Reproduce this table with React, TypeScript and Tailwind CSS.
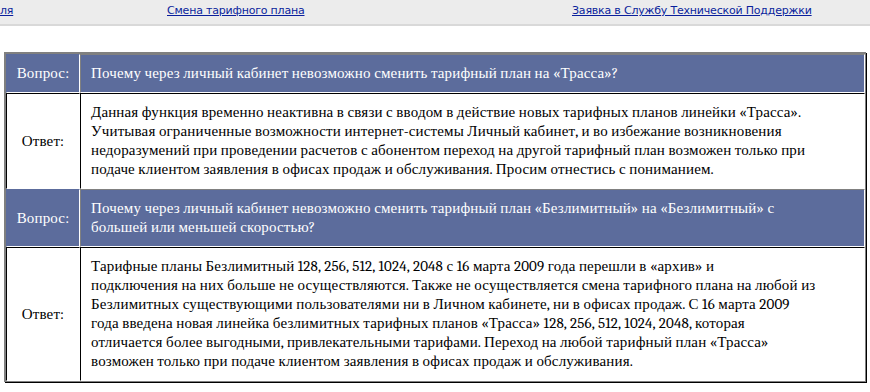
const rows = [
  {
    q: ["Почему через личный кабинет невозможно сменить тарифный план на «Трасса»?"],
    a: [
      "Данная функция временно неактивна в связи с вводом в действие новых тарифных планов линейки «Трасса».",
      "Учитывая ограниченные возможности интернет-системы Личный кабинет, и во избежание возникновения",
      "недоразумений при проведении расчетов с абонентом переход на другой тарифный план возможен только при",
      "подаче клиентом заявления в офисах продаж и обслуживания. Просим отнестись с пониманием.",
    ],
  },
  {
    q: [
      "Почему через личный кабинет невозможно сменить тарифный план «Безлимитный» на «Безлимитный» с",
      "большей или меньшей скоростью?",
    ],
    a: [
      "Тарифные планы Безлимитный 128, 256, 512, 1024, 2048 с 16 марта 2009 года перешли в «архив» и",
      "подключения на них больше не осуществляются. Также не осуществляется смена тарифного плана на любой из",
      "Безлимитных существующими пользователями ни в Личном кабинете, ни в офисах продаж. С 16 марта 2009",
      "года введена новая линейка безлимитных тарифных планов «Трасса» 128, 256, 512, 1024, 2048, которая",
      "отличается более выгодными, привлекательными тарифами. Переход на любой тарифный план «Трасса»",
      "возможен только при подаче клиентом заявления в офисах продаж и обслуживания.",
    ],
  },
]

function Lines({ lines }: { lines: string[] }) {
  return (
    <>
      {lines.map((l, i) => (
        <div key={i} className="whitespace-nowrap">{l}</div>
      ))}
    </>
  )
}

export default function App() {
  return (
    <div className="w-[870px] h-[392px] bg-white overflow-hidden">
      {/* верхнее меню */}
      <div className="h-[26px] bg-[#ececec] border-b-2 border-[#d9d9d9] relative [font-family:DejaVu_Sans] text-[11px] tracking-[-0.2px] text-[#0a1f9c]">
        <a href="#" className="absolute left-0 top-[3px] underline">ля</a>
        <a href="#" className="absolute left-[167px] top-[3px] underline">Смена тарифного плана</a>
        <a href="#" className="absolute left-[572px] top-[3px] underline">Заявка в Службу Технической Поддержки</a>
      </div>

      <div className="pl-[4px] pt-[26px]">
        <table className="w-[862px] border-separate border-spacing-0 border-l-2 border-t-2 border-[#808080] border-r border-b shadow-[1px_1px_0_#000] font-serif text-[15px] tracking-[0.15px] leading-[19px]">
          <tbody>
            {rows.flatMap((r, i) => [
              <tr key={`q${i}`} className="bg-[#5c6c9c] text-white">
                <td className="w-[74px] text-center border-l border-t border-l-[#5c6c9c] border-t-[#5c6c9c] border-r border-b border-r-white border-b-white py-[9px]">
                  Вопрос:
                </td>
                <td className="border-l border-t border-l-[#808080] border-t-[#808080] border-r border-b border-r-white border-b-white px-[10px] py-[9px]">
                  <Lines lines={r.q} />
                </td>
              </tr>,
              <tr key={`a${i}`} className="text-black">
                <td className="text-center border-l border-t border-l-black border-t-black border-r border-b border-r-white border-b-white py-[9px]">
                  Ответ:
                </td>
                <td className="border-l border-t border-l-black border-t-black border-r border-b border-r-white border-b-white px-[10px] py-[9px]">
                  <Lines lines={r.a} />
                </td>
              </tr>,
            ])}
          </tbody>
        </table>
      </div>
    </div>
  )
}
